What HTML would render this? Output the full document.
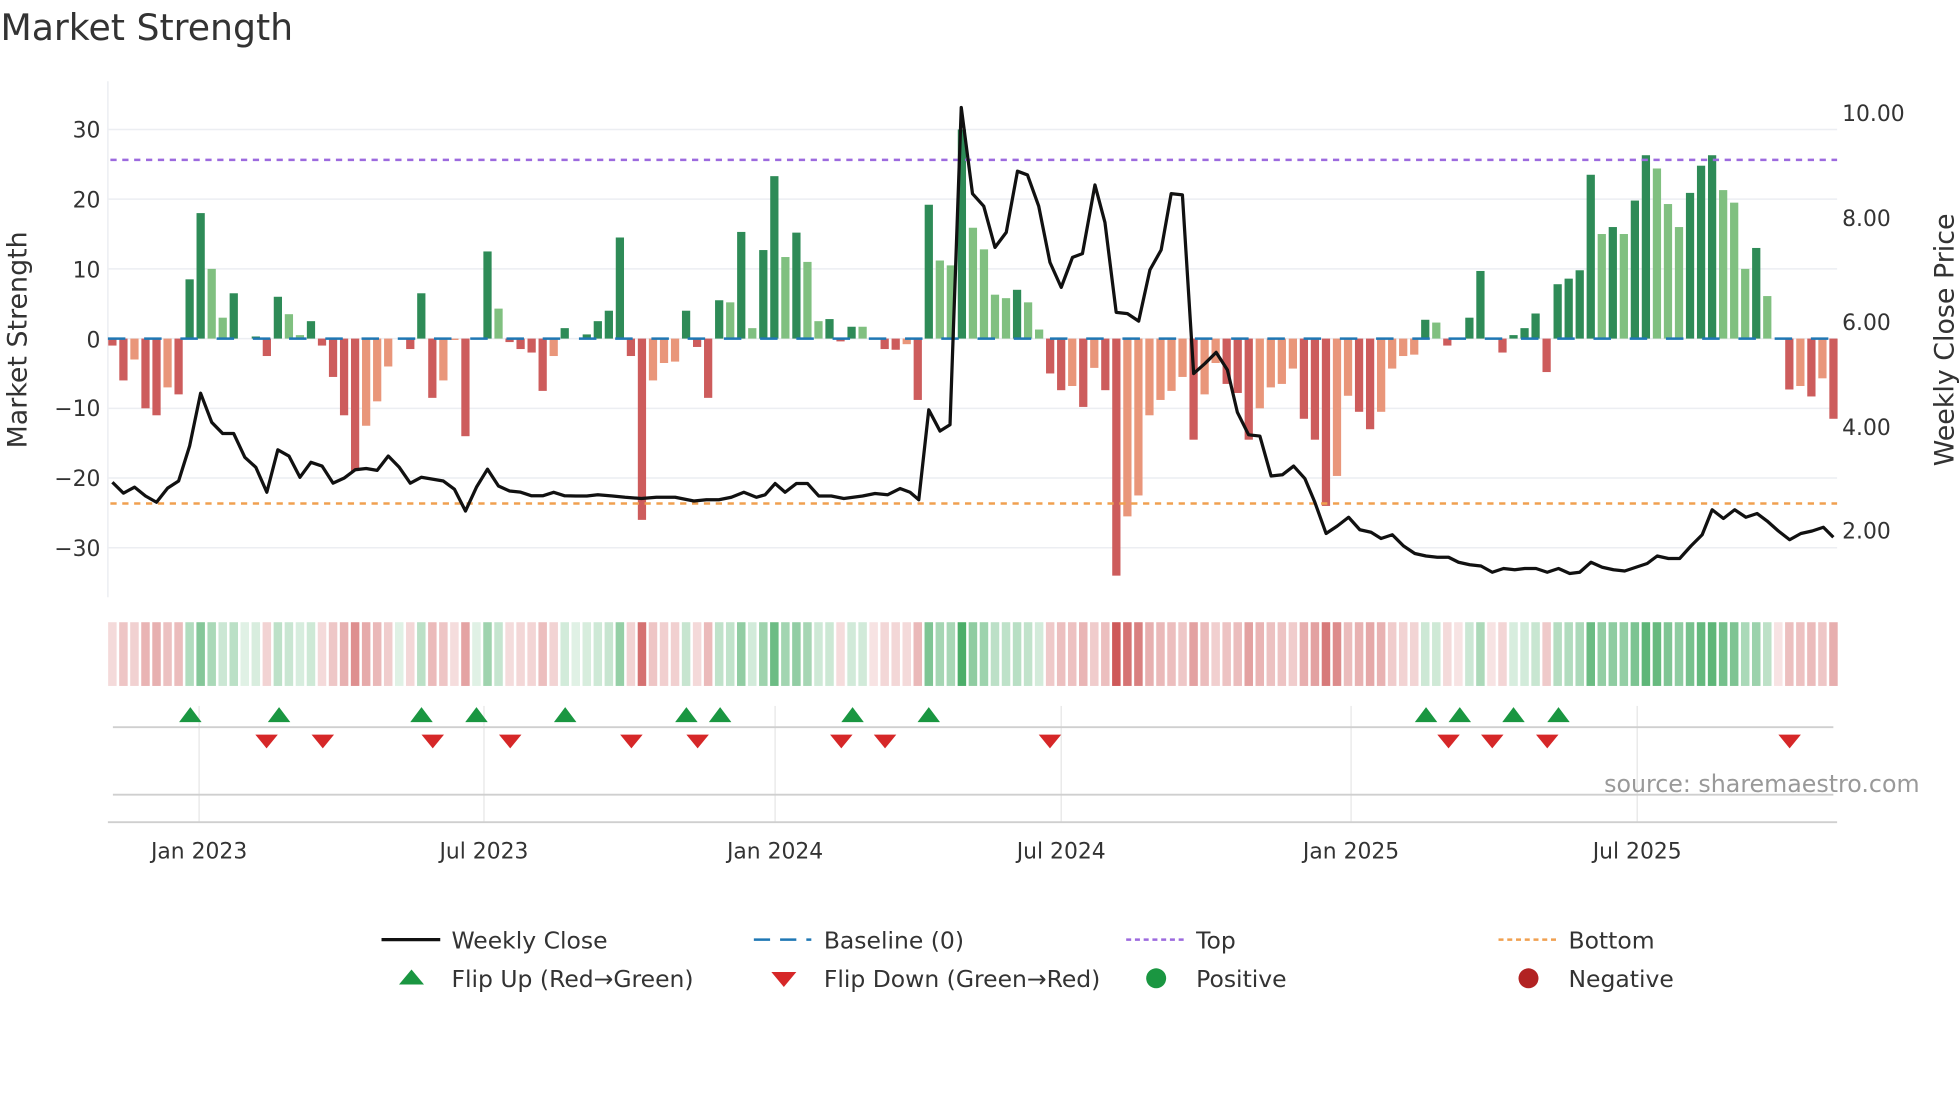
<!DOCTYPE html>
<html><head><meta charset="utf-8">
<style>
html,body{margin:0;padding:0;background:#fff;}
svg{display:block;}
text{font-family:"DejaVu Sans","Liberation Sans",sans-serif;fill:#333;}
</style></head>
<body>
<svg id="s" width="1960" height="1102" viewBox="0 0 1568 882" xmlns="http://www.w3.org/2000/svg">
<rect width="1568" height="882" fill="#fff"/>
<text x="0" y="32" font-size="29">Market Strength</text>
<g id="grid" stroke="#eceef2" stroke-width="1.2"></g>
<line x1="86" y1="65" x2="86" y2="478" stroke="#eceef2" stroke-width="1.2"/>
<g id="bars"></g>
<line x1="86" y1="271" x2="1470" y2="271" stroke="#1f77b4" stroke-width="2" stroke-dasharray="14 15"/>
<line x1="88" y1="128" x2="1470" y2="128" stroke="#9c6ade" stroke-width="2" stroke-dasharray="5 4.5"/>
<line x1="88" y1="403" x2="1470" y2="403" stroke="#f0a050" stroke-width="2" stroke-dasharray="5 4.5"/>
<polyline id="price" fill="none" stroke="#111" stroke-width="2.6" stroke-linejoin="round"/>
<g id="heat"></g>
<g stroke="#e6e6e6" stroke-width="1">
<line x1="159" y1="565" x2="159" y2="658"/><line x1="387" y1="565" x2="387" y2="658"/>
<line x1="620" y1="565" x2="620" y2="658"/><line x1="849" y1="565" x2="849" y2="658"/>
<line x1="1081" y1="565" x2="1081" y2="658"/><line x1="1310" y1="565" x2="1310" y2="658"/>
</g>
<line x1="90" y1="582" x2="1467" y2="582" stroke="#cfcfcf" stroke-width="1.5"/>
<line x1="90" y1="636" x2="1467" y2="636" stroke="#cfcfcf" stroke-width="1.5"/>
<line x1="86" y1="658" x2="1470" y2="658" stroke="#cfcfcf" stroke-width="1.5"/>
<g id="tri"></g>
<text x="1536" y="634" font-size="19" text-anchor="end" style="fill:#999">source: sharemaestro.com</text>
<g font-size="17.5" text-anchor="end">
<text x="80" y="110">30</text><text x="80" y="166">20</text><text x="80" y="222">10</text>
<text x="80" y="278">0</text><text x="80" y="333">−10</text><text x="80" y="389">−20</text><text x="80" y="445">−30</text>
</g>
<g font-size="17.5">
<text x="1474" y="97">10.00</text><text x="1474" y="181">8.00</text><text x="1474" y="264">6.00</text>
<text x="1474" y="348">4.00</text><text x="1474" y="431">2.00</text>
</g>
<text transform="translate(21,272) rotate(-90)" font-size="21.5" text-anchor="middle">Market Strength</text>
<text transform="translate(1563,272) rotate(-90)" font-size="21.5" text-anchor="middle">Weekly Close Price</text>
<g font-size="17.5" text-anchor="middle">
<text x="159" y="687">Jan 2023</text><text x="387" y="687">Jul 2023</text><text x="620" y="687">Jan 2024</text>
<text x="849" y="687">Jul 2024</text><text x="1081" y="687">Jan 2025</text><text x="1310" y="687">Jul 2025</text>
</g>
<g font-size="18.8">
<line x1="305" y1="752" x2="352" y2="752" stroke="#111" stroke-width="2.6"/>
<text x="361" y="759">Weekly Close</text>
<line x1="603" y1="752" x2="649" y2="752" stroke="#1f77b4" stroke-width="2" stroke-dasharray="13 8"/>
<text x="659" y="759">Baseline (0)</text>
<line x1="901" y1="752" x2="947" y2="752" stroke="#9c6ade" stroke-width="2" stroke-dasharray="4 3"/>
<text x="957" y="759">Top</text>
<line x1="1199" y1="752" x2="1245" y2="752" stroke="#f0a050" stroke-width="2" stroke-dasharray="4 3"/>
<text x="1255" y="759">Bottom</text>
<polygon points="319,788 339,788 329,776" fill="#1a9641"/>
<text x="361" y="790">Flip Up (Red→Green)</text>
<polygon points="617,778 637,778 627,790" fill="#d62728"/>
<text x="659" y="790">Flip Down (Green→Red)</text>
<circle cx="925" cy="783" r="8" fill="#1a9641"/>
<text x="957" y="790">Positive</text>
<circle cx="1223" cy="783" r="8" fill="#b22222"/>
<text x="1255" y="790">Negative</text>
</g>
</svg>
<script>
(function(){
var NS="http://www.w3.org/2000/svg";
function el(p,t,a){var e=document.createElementNS(NS,t);for(var k in a)e.setAttribute(k,a[k]);p.appendChild(e);return e;}
var grid=document.getElementById('grid');
[30,20,10,0,-10,-20,-30].forEach(function(v){var y=271-v*5.58;el(grid,'line',{x1:86,x2:1470,y1:y,y2:y});});
var D="-1r -6r -3l -10r -11r -7l -8r 8.5g 18g 10L 3L 6.5g 0z 0.3g -2.5r 6g 3.5L 0.5L 2.5g -1r -5.5r -11r -19r -12.5l -9l -4l 0z -1.5r 6.5g -8.5r -6l -0.2l -14r 0z 12.5g 4.3L -0.5r -1.5r -2r -7.5r -2.5l 1.5g 0z 0.6g 2.5g 4g 14.5g -2.5r -26r -6l -3.5l -3.3l 4g -1.2r -8.5r 5.5g 5.2L 15.3g 1.5L 12.7g 23.3g 11.7L 15.2g 11L 2.5L 2.8g -0.4r 1.7g 1.7L 0z -1.5r -1.6r -0.8l -8.8r 19.2g 11.2L 10.5L 30g 15.9L 12.8L 6.3L 5.8L 7g 5.2L 1.3L -5r -7.4r -6.8l -9.8r -4.2l -7.4r -34r -25.5l -22.5l -11l -8.8l -7.5l -5.5l -14.5r -8l -3.5l -6.5r -7.8r -14.5r -10l -7l -6.5l -4.3l -11.5r -14.5r -24r -19.7l -8.2l -10.5r -13r -10.5l -4.3l -2.5l -2.3l 2.7g 2.3L -1r 0z 3g 9.7g 0z -2r 0.5g 1.5g 3.6g -4.8r 7.8g 8.6g 9.8g 23.5g 15L 16g 15L 19.8g 26.3g 24.4L 19.3L 16L 20.9g 24.8g 26.3g 21.3L 19.5L 10L 13g 6.1L 0z -7.3r -6.8l -8.3r -5.7l -11.5r".split(' ');
var col={g:'#2e8b57',L:'#80c080',r:'#cd5c5c',l:'#e9967a'};
var bars=document.getElementById('bars'),heat=document.getElementById('heat');
D.forEach(function(s,k){
 var v=parseFloat(s),c=s.slice(-1),x=89.6+8.83*k;
 if(c!=='z'&&v!==0){var h=Math.abs(v)*5.58;el(bars,'rect',{x:x-3.3,width:6.6,y:v>0?271-h:271,height:h,fill:col[c]});}
 var t=0.18+0.72*Math.min(Math.abs(v)/32,1),base=v>0||c==='z'&&k<60?[46,160,80]:[200,70,70];
 if(c==='z')t=0.15;
 var rr=Math.round(255+(base[0]-255)*t),gg=Math.round(255+(base[1]-255)*t),bb=Math.round(255+(base[2]-255)*t);
 el(heat,'rect',{x:x-3.4,width:6.8,y:498,height:51,fill:'rgb('+rr+','+gg+','+bb+')'});
});
var P=[];
var Y1=[386,394.7,389.9,397,402,390.7,385,357,314.7,338,347,347,366,374,394,360,365,382,370,373,386.7,382.7,376,375,376.5,365,374,386.7,382,383.5,385,391.5,409,389.9,375.5,389,393,393.9,396.8,396.8,394,396.8,397,397,396];
Y1.forEach(function(y,k){P.push((89.6+8.83*k).toFixed(1)+','+y);});
var R=[[490,397],[500,398],[513,399],[525,398],[540,398],[555,401],[565,400],[575,400],[585,398],[595,394],[605,398],[612,396],[620,387],[628,394],[637,387],[646,387],[655,397],[665,397],[675,399],[690,397],[700,395],[710,396],[720,391],[728,394],[735,400],[743,328],[752,345],[760,340],[769,86],[778,155],[787,165],[796,198],[805,186],[814,137],[822,140],[831,165],[840,210],[849,230],[858,206],[866,203],[876,148],[884,178],[893,250],[902,251],[911,257],[920,216],[929,200],[937,155],[946,156],[955,299],[964,291],[973,282],[982,296],[990,330],[999,348],[1008,349],[1017,381],[1026,380],[1035,373],[1044,383],[1052,402],[1061,427],[1070,421],[1079,414],[1088,424],[1097,426],[1105,431],[1114,428],[1123,437],[1132,443],[1141,445],[1150,446],[1159,446],[1167,450],[1176,452],[1185,453],[1194,458],[1203,455],[1212,456],[1220,455],[1229,455],[1238,458],[1247,455],[1256,459],[1264,458],[1273,450],[1282,454],[1291,456],[1300,457],[1309,454],[1318,451],[1326,445],[1335,447],[1344,447],[1353,437],[1362,428],[1370,408],[1379,415],[1388,408],[1397,414],[1406,411],[1414,417],[1423,425],[1432,432],[1441,427],[1450,425],[1459,422],[1467,430]];
R.forEach(function(p){P.push(p[0]+','+p[1]);});
document.getElementById('price').setAttribute('points',P.join(' '));
var tri=document.getElementById('tri');
[152,223,337,381,452,549,576,682,743,1141,1168,1211,1247].forEach(function(x){el(tri,'polygon',{points:(x-9)+',578 '+(x+9)+',578 '+x+',566',fill:'#1a9641'});});
[213,258,346,408,505,558,673,708,840,1159,1194,1238,1432].forEach(function(x){el(tri,'polygon',{points:(x-9)+',588 '+(x+9)+',588 '+x+',599',fill:'#d62728'});});
})();
</script>
</body></html>
